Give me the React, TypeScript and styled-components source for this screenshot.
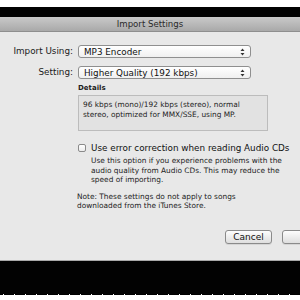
import React from 'react';
import styled, { createGlobalStyle } from 'styled-components';

const Global = createGlobalStyle`
  html, body {
    margin: 0;
    padding: 0;
    background: #fff;
  }
  body {
    font-family: "DejaVu Sans", "Liberation Sans", sans-serif;
  }
`;

const Screen = styled.div`
  width: 300px;
  height: 300px;
  overflow: hidden;
  display: flex;
  flex-direction: column;
  background: #fff;
`;

const WhiteStrip = styled.div`
  height: ${(p: { h: number }) => p.h}px;
  background: #fff;
  flex: none;
`;

const BlackBand = styled.div`
  height: ${(p: { h: number }) => p.h}px;
  background: #020202;
  flex: none;
`;

const Ticks = styled.div`
  height: 1px;
  flex: none;
  background: repeating-linear-gradient(
    to right,
    #000 0px,
    #000 3px,
    #fff 3px,
    #fff 4px,
    #000 4px,
    #000 11px
  );
`;

const Dialog = styled.div`
  flex: none;
  display: flex;
  flex-direction: column;
  border-bottom: 1px solid #a8a8a8;
`;

const TitleBar = styled.div`
  height: 15px;
  background: linear-gradient(#c9c9c9, #a9a9a9);
  border-bottom: 1px solid #8e8e8e;
  box-sizing: border-box;
  display: flex;
  align-items: center;
  justify-content: center;
  font-size: 8.6px;
  color: #2a2a2a;
`;

const Body = styled.div`
  height: 228px;
  background: #e8e8e8;
  padding: 13px 0 0 0;
  box-sizing: border-box;
  display: grid;
  grid-template-columns: 73px 1fr;
  column-gap: 5px;
  align-content: start;
`;

const Label = styled.div`
  font-size: 8.8px;
  color: #1a1a1a;
  text-align: right;
  height: 13px;
  line-height: 13px;
  margin-bottom: ${(p: { mb?: number }) => p.mb ?? 0}px;
`;

const Select = styled.div`
  width: 173px;
  height: 13px;
  box-sizing: border-box;
  border: 1px solid #8f8f8f;
  border-radius: 3px;
  background: linear-gradient(#ffffff, #f0f0f0);
  display: flex;
  align-items: center;
  justify-content: space-between;
  padding: 0 5px 0 5px;
  font-size: 8.8px;
  font-weight: 500;
  color: #111;
  margin-bottom: ${(p: { mb?: number }) => p.mb ?? 0}px;
`;

const Arrows = styled.svg`
  width: 5px;
  height: 8px;
  flex: none;
`;

const Field = styled.div`
  grid-column: 2;
`;

const SmallBold = styled.div`
  font-size: 7px;
  font-weight: bold;
  color: #222;
  line-height: 9px;
  margin-top: 5px;
`;

const DetailsBox = styled.div`
  width: 190px;
  height: 36px;
  box-sizing: border-box;
  margin-top: 2px;
  border: 1px solid #bcbcbc;
  background: #e2e2e2;
  padding: 4px 4px;
  font-size: 7.4px;
  line-height: 9.5px;
  color: #222;
`;

const CheckRow = styled.label`
  display: flex;
  align-items: center;
  gap: 5px;
  margin-top: 12px;
  font-size: 8.8px;
  color: #111;
  height: 10px;
  white-space: nowrap;
`;

const Box = styled.span`
  width: 8px;
  height: 8px;
  box-sizing: border-box;
  border: 1px solid #8a8a8a;
  border-radius: 2px;
  background: linear-gradient(#fff, #ececec);
  flex: none;
`;

const Help = styled.div`
  margin: 3px 0 0 13px;
  font-size: 7.4px;
  line-height: 9.5px;
  color: #222;
`;

const Note = styled.div`
  margin: 7px 0 0 -1px;
  font-size: 7.4px;
  line-height: 9.5px;
  color: #222;
`;

const Buttons = styled.div`
  display: flex;
  gap: 10px;
  margin: 19px 0 0 147px;
`;

const Button = styled.div`
  width: ${(p: { w: number }) => p.w}px;
  height: 14px;
  flex: none;
  box-sizing: border-box;
  border: 1px solid #8a8a8a;
  border-radius: 3px;
  background: linear-gradient(#fdfdfd, #dedede);
  box-shadow: 0 1px 0 rgba(0, 0, 0, 0.08);
  display: flex;
  align-items: center;
  justify-content: center;
  font-size: 9px;
  color: #111;
`;

function UpDown() {
  return (
    <Arrows viewBox="0 0 5 8">
      <path d="M2.5 0.5 L4.5 3 L0.5 3 Z" fill="#333" />
      <path d="M2.5 7.5 L4.5 5 L0.5 5 Z" fill="#333" />
    </Arrows>
  );
}

export default function App() {
  return (
    <Screen>
      <Global />
      <WhiteStrip h={7} />
      <BlackBand h={10} />
      <Dialog>
        <TitleBar>Import Settings</TitleBar>
        <Body>
          <Label mb={8}>Import Using:</Label>
          <Select mb={8}>
            <span>MP3 Encoder</span>
            <UpDown />
          </Select>
          <Label>Setting:</Label>
          <Select>
            <span>Higher Quality (192 kbps)</span>
            <UpDown />
          </Select>
          <Field>
            <SmallBold>Details</SmallBold>
            <DetailsBox>
              96 kbps (mono)/192 kbps (stereo), normal
              <br />
              stereo, optimized for MMX/SSE, using MP.
            </DetailsBox>
            <CheckRow>
              <Box />
              Use error correction when reading Audio CDs
            </CheckRow>
            <Help>
              Use this option if you experience problems with the
              <br />
              audio quality from Audio CDs. This may reduce the
              <br />
              speed of importing.
            </Help>
            <Note>
              Note: These settings do not apply to songs
              <br />
              downloaded from the iTunes Store.
            </Note>
            <Buttons>
              <Button w={47}>Cancel</Button>
              <Button w={60}>OK</Button>
            </Buttons>
          </Field>
        </Body>
      </Dialog>
      <BlackBand h={33} />
      <Ticks />
      <WhiteStrip h={5} />
    </Screen>
  );
}
